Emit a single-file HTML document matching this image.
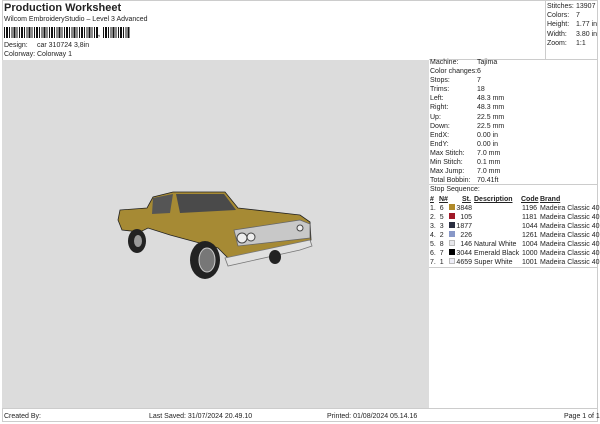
<!DOCTYPE html>
<html><head><style>
*{margin:0;padding:0;box-sizing:border-box}
body{width:600px;height:424px;background:#fff;font-family:"Liberation Sans",Arial,sans-serif;color:#222;position:relative;overflow:hidden}
.a{position:absolute;white-space:nowrap;font-size:7px;line-height:9px}
.t{font-size:11px;font-weight:bold;left:4px;top:2px;position:absolute}
.bc{position:absolute;top:27px;height:11px;left:4px;width:126px;background:repeating-linear-gradient(90deg,#111 0 1px,#fff 1px 2px,#111 2px 4px,#fff 4px 5px,#111 5px 6px,#fff 6px 7.5px)}
</style></head><body>
<div class="t">Production Worksheet</div>
<div class="a" style="left:4px;top:15px">Wilcom EmbroideryStudio – Level 3 Advanced</div>
<div class="bc" style="width:95px"></div>
<div class="a" style="left:98px;top:30px;font-weight:bold">,</div>
<div class="bc" style="left:103px;width:27px"></div>
<div class="a" style="left:4px;top:41px">Design:</div><div class="a" style="left:37px;top:41px">car 310724 3,8in</div>
<div class="a" style="left:4px;top:50px">Colorway:</div><div class="a" style="left:37px;top:50px">Colorway 1</div>
<div style="position:absolute;left:2px;top:0;width:596px;height:422px;border:1px solid #ccc"></div>
<div style="position:absolute;left:2px;top:60px;width:427px;height:348px;background:#dcdcdc"></div>
<div style="position:absolute;left:545px;top:0;width:1px;height:60px;background:#ccc"></div>
<div style="position:absolute;left:429px;top:59px;width:169px;height:1px;background:#ccc"></div>
<div style="position:absolute;left:429px;top:184px;width:169px;height:1px;background:#ccc"></div>
<div style="position:absolute;left:429px;top:267px;width:169px;height:1px;background:#ccc"></div>
<div style="position:absolute;left:2px;top:408px;width:596px;height:1px;background:#ccc"></div>
<div class="a" style="left:547px;top:2px;line-height:9.2px">Stitches:<br>Colors:<br>Height:<br>Width:<br>Zoom:</div>
<div class="a" style="left:576px;top:2px;line-height:9.2px">13907<br>7<br>1.77 in<br>3.80 in<br>1:1</div>
<div class="a" style="left:430px;top:58px;line-height:9.1px">Machine:<br>Color changes:<br>Stops:<br>Trims:<br>Left:<br>Right:<br>Up:<br>Down:<br>EndX:<br>EndY:<br>Max Stitch:<br>Min Stitch:<br>Max Jump:<br>Total Bobbin:</div>
<div class="a" style="left:477px;top:58px;line-height:9.1px">Tajima<br>6<br>7<br>18<br>48.3 mm<br>48.3 mm<br>22.5 mm<br>22.5 mm<br>0.00 in<br>0.00 in<br>7.0 mm<br>0.1 mm<br>7.0 mm<br>70.41ft</div>
<div class="a" style="left:430px;top:185px">Stop Sequence:</div>
<div class="a" style="left:430px;top:195px;font-weight:bold;text-decoration:underline">#</div>
<div class="a" style="left:439px;top:195px;font-weight:bold;text-decoration:underline">N#</div>
<div class="a" style="left:462px;top:195px;font-weight:bold;text-decoration:underline">St.</div>
<div class="a" style="left:474px;top:195px;font-weight:bold;text-decoration:underline">Description</div>
<div class="a" style="left:521px;top:195px;font-weight:bold;text-decoration:underline">Code</div>
<div class="a" style="left:540px;top:195px;font-weight:bold;text-decoration:underline">Brand</div>
<div class="a" style="left:430px;top:203.5px;line-height:9px">1.&nbsp;&nbsp;6<br>2.&nbsp;&nbsp;5<br>3.&nbsp;&nbsp;3<br>4.&nbsp;&nbsp;2<br>5.&nbsp;&nbsp;8<br>6.&nbsp;&nbsp;7<br>7.&nbsp;&nbsp;1</div>
<div style="position:absolute;left:449px;top:204px;width:6px;height:6px;background:#b08a2a"></div>
<div style="position:absolute;left:449px;top:213px;width:6px;height:6px;background:#a01828"></div>
<div style="position:absolute;left:449px;top:222px;width:6px;height:6px;background:#2a2e40"></div>
<div style="position:absolute;left:449px;top:231px;width:6px;height:6px;background:#8898c8"></div>
<div style="position:absolute;left:449px;top:240px;width:6px;height:6px;background:#e8e8ec;border:1px solid #bbb"></div>
<div style="position:absolute;left:449px;top:249px;width:6px;height:6px;background:#000"></div>
<div style="position:absolute;left:449px;top:258px;width:6px;height:6px;background:#eeeef8;border:1px solid #bbb"></div>
<div class="a" style="left:456px;width:16px;text-align:right;top:203.5px;line-height:9px">3848<br>105<br>1877<br>226<br>146<br>3044<br>4659</div>
<div class="a" style="left:474px;top:203.5px;line-height:9px"><br><br><br><br>Natural White<br>Emerald Black<br>Super White</div>
<div class="a" style="left:522px;top:203.5px;line-height:9px">1196<br>1181<br>1044<br>1261<br>1004<br>1000<br>1001</div>
<div class="a" style="left:540px;top:203.5px;line-height:9px">Madeira Classic 40<br>Madeira Classic 40<br>Madeira Classic 40<br>Madeira Classic 40<br>Madeira Classic 40<br>Madeira Classic 40<br>Madeira Classic 40</div>
<div class="a" style="left:4px;top:412px">Created By:</div>
<div class="a" style="left:149px;top:412px">Last Saved: 31/07/2024 20.49.10</div>
<div class="a" style="left:327px;top:412px">Printed: 01/08/2024 05.14.16</div>
<div class="a" style="left:564px;top:412px">Page 1 of 1</div>
<svg style="position:absolute;left:110px;top:180px" width="210" height="110" viewBox="0 0 210 110">
<path d="M10 30 L37 28 L43 17 L63 12 L115 12 L128 28 L190 35 L200 42 L201 60 L190 64 L150 72 L120 80 L108 68 L60 55 L38 48 L30 52 L12 50 L8 40 Z" fill="#a68a34" stroke="#222" stroke-width="0.8"/>
<path d="M43 18 L63 14 L60 33 L42 34 Z" fill="#555"/>
<path d="M66 14 L114 14 L126 30 L70 33 Z" fill="#4a4a4a"/>
<path d="M124 50 L190 40 L200 44 L200 58 L128 66 Z" fill="#c8c8c8" stroke="#666" stroke-width="0.8"/>
<path d="M115 78 L200 60 L202 66 L190 70 L118 86 Z" fill="#e0e0e0" stroke="#777" stroke-width="0.8"/>
<circle cx="132" cy="58" r="5" fill="#eee" stroke="#444"/>
<circle cx="141" cy="57" r="4" fill="#eee" stroke="#444"/>
<circle cx="190" cy="48" r="3" fill="#eee" stroke="#444"/>
<ellipse cx="95" cy="80" rx="15" ry="19" fill="#222"/>
<ellipse cx="97" cy="80" rx="8" ry="12" fill="#777" stroke="#ccc"/>
<ellipse cx="27" cy="61" rx="9" ry="12" fill="#222"/>
<ellipse cx="28" cy="61" rx="4" ry="6" fill="#999"/>
<ellipse cx="165" cy="77" rx="6" ry="7" fill="#222"/>
</svg>
</body></html>
